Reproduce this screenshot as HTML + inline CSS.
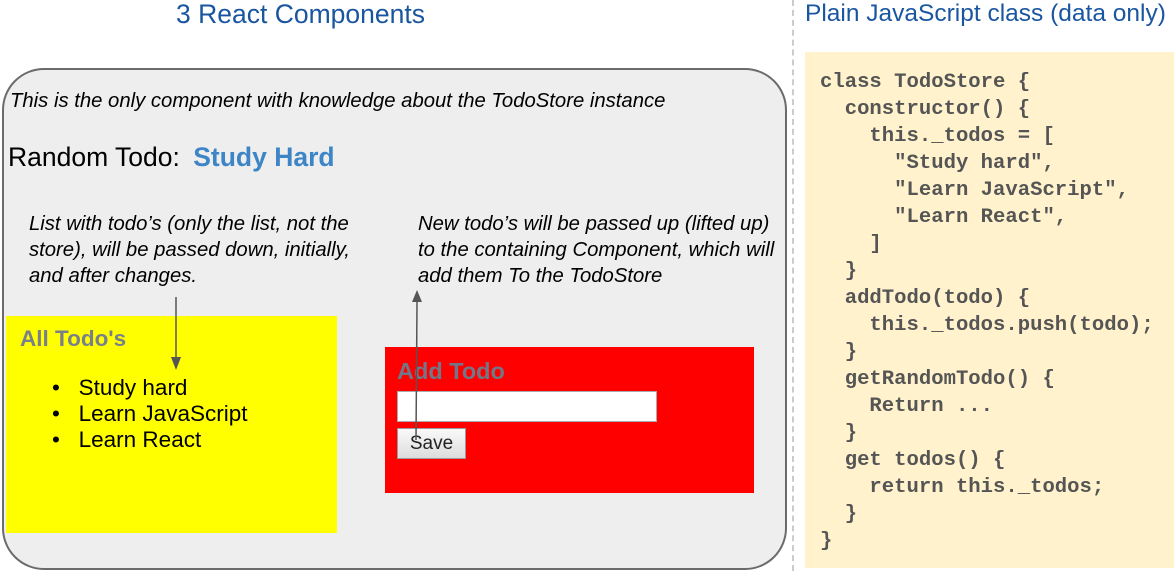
<!DOCTYPE html>
<html><head><meta charset="utf-8"><style>
body{margin:0;width:1174px;height:571px;background:#fff;position:relative;overflow:hidden;font-family:"Liberation Sans",sans-serif}
.a{position:absolute;white-space:nowrap}
.it{font-style:italic;font-size:20.3px;line-height:26px;color:#000}
pre.a{margin:0;white-space:pre;font-family:"Liberation Mono",monospace;font-weight:bold;font-size:20.6px;line-height:27px;color:#555}
</style></head><body>
<div class="a" style="left:176px;top:-1px;font-size:26.5px;color:#1a56a0">3 React Components</div>
<div class="a" style="left:805px;top:0px;font-size:24.5px;color:#1a56a0">Plain JavaScript class (data only)</div>
<div class="a" style="left:792px;top:0;height:571px;border-left:2px dashed #ccc"></div>
<div class="a" style="left:805px;top:52px;width:369px;height:516px;background:#fff2cc"></div>
<pre class="a" style="left:820px;top:69px">class TodoStore {
  constructor() {
    this._todos = [
      "Study hard",
      "Learn JavaScript",
      "Learn React",
    ]
  }
  addTodo(todo) {
    this._todos.push(todo);
  }
  getRandomTodo() {
    Return ...
  }
  get todos() {
    return this._todos;
  }
}</pre>
<div class="a" style="left:2px;top:68px;width:781px;height:498px;border:2px solid #6b6b6b;border-radius:42px;background:#eee"></div>
<div class="a it" style="left:10px;top:88px">This is the only component with knowledge about the TodoStore instance</div>
<div class="a" style="left:8px;top:142px;font-size:26.5px"><span>Random Todo:</span> <span style="color:#3d85c6;font-weight:bold;margin-left:6px">Study Hard</span></div>
<div class="a it" style="left:29px;top:211px">List with todo’s (only the list, not the<br>store), will be passed down, initially,<br>and after changes.</div>
<div class="a it" style="left:418px;top:211px">New todo’s will be passed up (lifted up)<br>to the containing Component, which will<br>add them To the TodoStore</div>
<div class="a" style="left:6px;top:316px;width:331px;height:217px;background:#ff0"></div>
<div class="a" style="left:20px;top:326px;font-size:22.5px;font-weight:bold;color:#7a808a">All Todo's</div>
<div class="a" style="left:52px;top:375px;font-size:22.5px;line-height:26px">
<div>•&nbsp;&nbsp; Study hard</div><div>•&nbsp;&nbsp; Learn JavaScript</div><div>•&nbsp;&nbsp; Learn React</div></div>
<div class="a" style="left:385px;top:347px;width:369px;height:146px;background:#f00"></div>
<div class="a" style="left:397px;top:358px;font-size:23.5px;font-weight:bold;color:#707888">Add Todo</div>
<div class="a" style="left:397px;top:391px;width:258px;height:29px;background:#fff;border:1px solid #aaa"></div>
<div class="a" style="left:397px;top:428px;width:67px;height:29px;border:1px solid #999;background:linear-gradient(#fafafa,#ddd);font-size:19px;line-height:29px;text-align:center;color:#222">Save</div>
<svg class="a" style="left:0;top:0" width="790" height="571">
<line x1="176" y1="297" x2="176" y2="360" stroke="#555" stroke-width="1.5"/>
<polygon points="171,357 181,357 176,370" fill="#555"/>
<line x1="417" y1="302" x2="416" y2="440" stroke="#555" stroke-width="1.5"/>
<polygon points="412,302 422,302 417,290" fill="#555"/>
</svg>
</body></html>
